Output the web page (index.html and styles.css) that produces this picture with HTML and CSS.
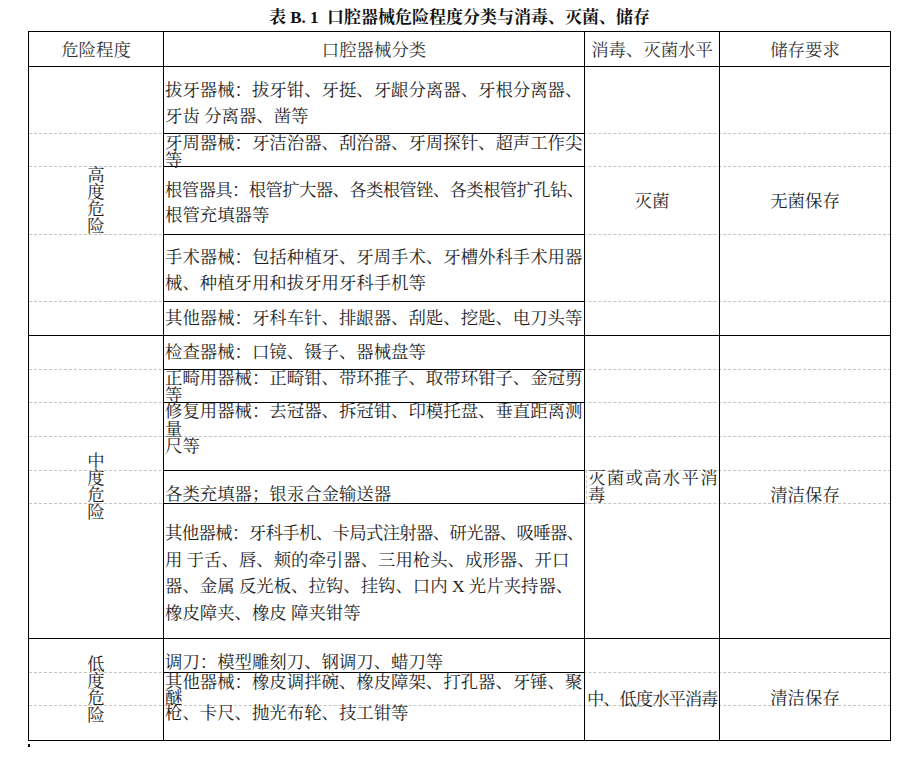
FILE: index.html
```html
<!DOCTYPE html>
<html lang="zh-CN">
<head>
<meta charset="utf-8">
<title>表B.1 口腔器械危险程度分类与消毒、灭菌、储存</title>
<link rel="stylesheet" href="styles.css">
</head>
<body>
<div class="page">
  <div class="title">表 B. 1&nbsp; 口腔器械危险程度分类与消毒、灭菌、储存</div>
  <div class="table">
    <div class="dash r2"></div>
    <div class="dash r3"></div>
    <div class="dash r4"></div>
    <div class="dash r5"></div>
    <div class="dash r6"></div>
    <div class="dash r7"></div>
    <div class="dash r8"></div>
    <div class="dash r9"></div>
    <div class="dash r10"></div>
    <div class="dash r11"></div>
    <div class="dash r12"></div>
    <div class="dash r13"></div>
    <div class="dash r14"></div>
    <div class="dash r15"></div>

    <div class="cell head c1">危险程度</div>
    <div class="cell head c2">口腔器械分类</div>
    <div class="cell head c3">消毒、灭菌水平</div>
    <div class="cell head c4">储存要求</div>

    <div class="cell c1 level high"><span>高<br>度<br>危<br>险</span></div>
    <div class="cell c1 level mid"><span>中<br>度<br>危<br>险</span></div>
    <div class="cell c1 level low"><span>低<br>度<br>危<br>险</span></div>

    <div class="cell c2 item i2">拔牙器械：拔牙钳、牙挺、牙龈分离器、牙根分离器、<br>牙齿 分离器、凿等</div>
    <div class="cell c2 item i3">牙周器械：牙洁治器、刮治器、牙周探针、超声工作尖<br>等</div>
    <div class="cell c2 item i4"><span class="tight">根管器具：根管扩大器、各类根管锉、各类根管扩孔钻、</span><br>根管充填器等</div>
    <div class="cell c2 item i5">手术器械：包括种植牙、牙周手术、牙槽外科手术用器<br>械、种植牙用和拔牙用牙科手机等</div>
    <div class="cell c2 item i6">其他器械：牙科车针、排龈器、刮匙、挖匙、电刀头等</div>
    <div class="cell c2 item i7">检查器械：口镜、镊子、器械盘等</div>
    <div class="cell c2 item i8">正畸用器械：正畸钳、带环推子、取带环钳子、金冠剪<br>等</div>
    <div class="cell c2 item i9">修复用器械：去冠器、拆冠钳、印模托盘、垂直距离测<br>量<br>尺等</div>
    <div class="cell c2 item i11">各类充填器；银汞合金输送器</div>
    <div class="cell c2 item i12"><span class="tight">其他器械：牙科手机、卡局式注射器、研光器、吸唾器、</span><br>用 于舌、唇、颊的牵引器、三用枪头、成形器、开口<br>器、金属 反光板、拉钩、挂钩、口内 X 光片夹持器、<br>橡皮障夹、橡皮 障夹钳等</div>
    <div class="cell c2 item i13">调刀：模型雕刻刀、钢调刀、蜡刀等</div>
    <div class="cell c2 item i14">其他器械：橡皮调拌碗、橡皮障架、打孔器、牙锤、聚<br>醚<br>枪、卡尺、抛光布轮、技工钳等</div>

    <div class="cell c3 center high">灭菌</div>
    <div class="cell c3 mid3"><span class="boxed">灭菌或高水平消<br>毒</span></div>
    <div class="cell c3 low3"><span>中、低度水平消毒</span></div>

    <div class="cell c4 center high">无菌保存</div>
    <div class="cell c4 center mid pt13">清洁保存</div>
    <div class="cell c4 center low pt14">清洁保存</div>
  </div>
  <div class="mark"></div>
</div>
</body>
</html>
```

FILE: styles.css
```css
html, body {
  margin: 0;
  padding: 0;
  background: #fff;
}

.page {
  padding: 6px 0 0 28px;
  font-family: "Liberation Serif", "Noto Serif CJK SC", "Noto Sans CJK SC", serif;
  color: #1e1e1e;
}

.title {
  width: 863px;
  text-align: center;
  font-size: 17px;
  font-weight: bold;
  line-height: 24px;
  height: 25px;
  white-space: pre;
  color: #111;
}

.table {
  display: grid;
  width: 862px;
  grid-template-columns: 135px 421px 135px 171px;
  grid-template-rows: 35px 67px 33px 68px 67px 34px 34px 33px 34px 34px 33px 135px 34px 33px 35px;
  border-top: 1px solid #000;
  border-left: 1px solid #000;
  font-size: 17.4px;
}

.dash {
  grid-column: 1 / -1;
  border-bottom: 1px dashed #c4c4c4;
}
.r2 { grid-row: 2; }
.r3 { grid-row: 3; }
.r4 { grid-row: 4; }
.r5 { grid-row: 5; }
.r6 { grid-row: 6; }
.r7 { grid-row: 7; }
.r8 { grid-row: 8; }
.r9 { grid-row: 9; }
.r10 { grid-row: 10; }
.r11 { grid-row: 11; }
.r12 { grid-row: 12; }
.r13 { grid-row: 13; }
.r14 { grid-row: 14; }
.r15 { grid-row: 15; }

.cell {
  border-right: 1px solid #000;
  border-bottom: 1px solid #000;
  min-width: 0;
  min-height: 0;
}

.c1 { grid-column: 1; }
.c2 { grid-column: 2; }
.c3 { grid-column: 3; }
.c4 { grid-column: 4; }

.head {
  grid-row: 1;
  display: flex;
  align-items: center;
  justify-content: center;
  color: #333;
  line-height: 20px;
  white-space: nowrap;
  padding-top: 1px;
}

.high { grid-row: 2 / 7; }
.mid { grid-row: 7 / 13; }
.low { grid-row: 13 / 16; }

.level {
  display: flex;
  align-items: center;
  justify-content: center;
  line-height: 17px;
  text-align: center;
}

.center {
  display: flex;
  align-items: center;
  justify-content: center;
  white-space: nowrap;
}

.high.center { padding-bottom: 4px; }
.pt13 { padding-top: 13px; }
.pt14 { padding-top: 14px; }

.item {
  padding-left: 1px;
  white-space: nowrap;
  overflow: visible;
}

.tight { letter-spacing: -0.65px; }

.i2 { grid-row: 2; line-height: 26px; padding-top: 10px; }
.i3 { grid-row: 3; line-height: 17px; padding-top: 1px; }
.i4 { grid-row: 4; line-height: 25px; padding-top: 11px; }
.i5 { grid-row: 5; line-height: 26px; padding-top: 9px; }
.i6 { grid-row: 6; line-height: 26px; padding-top: 3px; }
.i7 { grid-row: 7; line-height: 26px; padding-top: 3px; }
.i8 { grid-row: 8; line-height: 16.5px; padding-top: 0; }
.i9 { grid-row: 9 / 11; line-height: 17.5px; padding-top: 0; }
.i11 { grid-row: 11; line-height: 26px; padding-top: 10px; }
.i12 { grid-row: 12; line-height: 26.5px; padding-top: 16px; }
.i13 { grid-row: 13; line-height: 24px; padding-top: 11px; }
.i14 { grid-row: 14 / 16; line-height: 15.5px; padding-top: 2px; }

.mid3 {
  grid-row: 7 / 13;
  display: flex;
  align-items: center;
  padding-left: 1px;
}

.boxed {
  display: block;
  line-height: 17px;
  letter-spacing: 1.3px;
  white-space: nowrap;
  border-left: 1px dashed #c4c4c4;
  padding-left: 1px;
}

.low3 {
  grid-row: 13 / 16;
  display: flex;
  align-items: center;
  padding: 15px 0 0 2px;
  white-space: nowrap;
  letter-spacing: -1.1px;
}

.mark {
  width: 2px;
  height: 3px;
  margin-top: 3px;
  background: #000;
}
```
